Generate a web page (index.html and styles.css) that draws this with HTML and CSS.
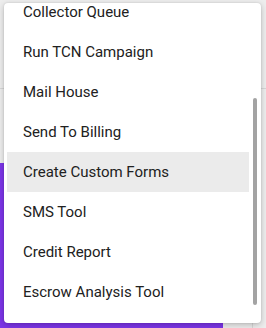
FILE: index.html
```html
<!DOCTYPE html>
<html lang="en">
<head>
    <meta charset="UTF-8">
    <title>Tools Menu</title>
    <link rel="stylesheet" href="styles.css">
</head>
<body>
    <div class="backdrop">
        <div class="top-bar"></div>
        <div class="lower">
            <div class="purple-block"></div>
            <div class="side-col"></div>
        </div>
    </div>

    <div class="menu">
        <ul class="menu-list">
            <li class="menu-item">Collector Queue</li>
            <li class="menu-item">Run TCN Campaign</li>
            <li class="menu-item">Mail House</li>
            <li class="menu-item">Send To Billing</li>
            <li class="menu-item active">Create Custom Forms</li>
            <li class="menu-item">SMS Tool</li>
            <li class="menu-item">Credit Report</li>
            <li class="menu-item">Escrow Analysis Tool</li>
        </ul>
        <div class="scroll-track">
            <div class="scroll-thumb"></div>
        </div>
    </div>
</body>
</html>
```

FILE: styles.css
```css
body {
    margin: 0;
    font-family: Roboto, 'Liberation Sans', sans-serif;
    background-color: #ededed;
    color: #212121;
}
.backdrop {
    width: 266px;
    height: 328px;
    display: flex;
    flex-direction: column;
    overflow: hidden;
}
.top-bar {
    height: 88px;
    border-bottom: 1px solid #d6d6d6;
}
.lower {
    flex: 1;
    display: flex;
    align-items: flex-end;
}
.purple-block {
    width: 223px;
    height: 165px;
    background: #7c35e8;
}
.side-col {
    width: 29px;
    height: 165px;
    border-right: 1px solid #d8d8d8;
}
.menu {
    position: absolute;
    top: 3px;
    left: 4px;
    width: 257px;
    height: 320px;
    box-sizing: border-box;
    padding: 0 4px 0 3px;
    background: #ffffff;
    border-radius: 4px;
    box-shadow: 0 2px 6px rgba(0, 0, 0, 0.22), 0 0 2px rgba(0, 0, 0, 0.12);
    display: flex;
    gap: 4px;
    overflow: hidden;
}
.menu-list {
    flex: 1;
    list-style: none;
    margin: -11px 0 0 0;
    padding: 0;
}
.menu-item {
    height: 40px;
    display: flex;
    align-items: center;
    padding-left: 16px;
    font-size: 15px;
    cursor: pointer;
}
.menu-item.active {
    background: #ebebeb;
}
.scroll-track {
    width: 4px;
}
.scroll-thumb {
    margin-top: 95px;
    height: 207px;
    border-radius: 2px;
    background: #a3a3a3;
}
```
